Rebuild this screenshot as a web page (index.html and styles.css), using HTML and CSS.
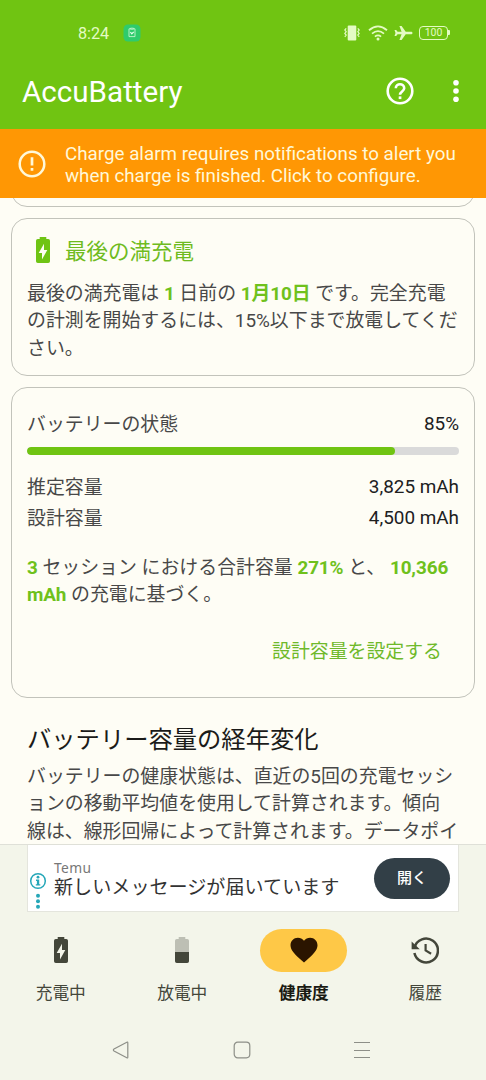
FILE: index.html
```html
<!DOCTYPE html>
<html lang="ja">
<head>
<meta charset="utf-8">
<title>AccuBattery</title>
<link rel="stylesheet" href="styles.css">
</head>
<body>
<div class="screen">
  <header class="top">
    <div class="status">
      <span class="clock">8:24</span>
      <svg class="app-badge" width="18" height="18" viewBox="0 0 18 18"><rect x=".5" y=".5" width="17" height="17" rx="4.5" fill="#2fcb6c"/><path d="M7.500 4.800H6v7.800h6V4.800h-1.500M7.500 4.200h3v1h-3z" fill="none" stroke="#c5f5cf" stroke-width=".9"/><path d="M7.400 8l1.400 1.800 1.900-2" fill="none" stroke="#e9fff0" stroke-width="1.200"/></svg>
      <div class="status-icons">
        <svg width="16" height="16" viewBox="0 0 16 16"><rect x="3.700" y="0.500" width="8.600" height="15" rx="1" fill="#e4fbc4"/><path d="M2.200 3.300L.8 5l1.400 1.700L.8 8.400l1.400 1.700-1.400 1.700M13.800 3.300L15.200 5l-1.400 1.700 1.400 1.700-1.400 1.700 1.400 1.700" fill="none" stroke="#e4fbc4" stroke-width="1.200"/></svg>
        <svg width="20" height="16" viewBox="0 0 20 16"><g fill="none" stroke="#e4fbc4" stroke-width="1.800"><path d="M1 5.300Q10-2.600 19 5.300M4 8.600q6-5 12 0M6.900 11.600q3.100-2.300 6.200 0"/></g><circle cx="10" cy="14" r="1.500" fill="#e4fbc4"/></svg>
        <svg width="19" height="16" viewBox="0 0 19 16"><path d="M18.500 8c0-.8-.7-1.300-1.600-1.300h-5.200L7.600 1H5.400l2.200 5.700H3.600L2.200 4.900H.5L1.500 8 .5 11.100h1.700l1.400-1.800h4L5.400 15h2.200l4.100-5.700h5.200c.9 0 1.600-.5 1.600-1.300z" fill="#e4fbc4"/></svg>
        <span class="battery">100</span>
      </div>
    </div>
    <div class="appbar">
      <h1>AccuBattery</h1>
      <svg class="help" width="28" height="28" viewBox="0 0 28 28"><circle cx="14" cy="14" r="12.300" fill="none" stroke="#fff" stroke-width="2.600"/><path d="M9.800 11.300c0-5.400 8.400-5.400 8.400 0 0 3.100-4.200 3.300-4.200 6.500" fill="none" stroke="#fff" stroke-width="2.600"/><rect x="12.700" y="19.400" width="2.700" height="2.700" fill="#fff"/></svg>
      <svg class="more" width="8" height="24" viewBox="0 0 8 24"><g fill="#fff"><circle cx="4" cy="3.800" r="2.800"/><circle cx="4" cy="12" r="2.800"/><circle cx="4" cy="20.200" r="2.800"/></g></svg>
    </div>
  </header>

  <div class="banner">
    <svg width="28" height="28" viewBox="0 0 28 28"><circle cx="14" cy="14" r="12.300" fill="none" stroke="#fff8d8" stroke-width="2.500"/><path d="M14 7.300v8.200M14 18v2.700" stroke="#fff8d8" stroke-width="2.700"/></svg>
    <p>Charge alarm requires notifications to alert you<br>when charge is finished. Click to configure.</p>
  </div>

  <main class="content">
    <section class="card card-prev"></section>
    <section class="card card-last">
      <h2><svg width="16" height="28" viewBox="0 0 16 28"><path fill="#6fc414" fill-rule="evenodd" d="M4.700 3V1h6.600v2h1.900A1.800 1.800 0 0 1 15 4.800v20.400a1.800 1.800 0 0 1-1.800 1.800H2.800A1.800 1.800 0 0 1 1 25.200V4.800A1.800 1.800 0 0 1 2.800 3zM9 7.700L3.700 17H7v6.500L12.300 14H9z"/></svg><span>最後の満充電</span></h2>
      <p class="text">最後の満充電は <b>1</b> 日前の <b>1月10日</b> です。完全充電<br>の計測を開始するには、15%以下まで放電してくだ<br>さい。</p>
    </section>
    <section class="card card-health">
      <div class="row"><span class="label">バッテリーの状態</span><span class="value">85%</span></div>
      <div class="bar"><div class="fill" style="width:85.2%"></div></div>
      <div class="row"><span class="label">推定容量</span><span class="value">3,825 mAh</span></div>
      <div class="row"><span class="label">設計容量</span><span class="value">4,500 mAh</span></div>
      <p class="text summary"><b>3</b> セッション における合計容量 <b>271%</b> と、 <b>10,366<br>mAh</b> の充電に基づく。</p>
      <div class="action">設計容量を設定する</div>
    </section>
    <section class="history">
      <h3>バッテリー容量の経年変化</h3>
      <p class="text">バッテリーの健康状態は、直近の5回の充電セッシ<br>ョンの移動平均値を使用して計算されます。傾向<br>線は、線形回帰によって計算されます。データポイ</p>
    </section>
  </main>

  <footer class="bottom">
    <div class="ad">
      <svg class="ad-choices" width="18" height="38" viewBox="0 0 18 38"><circle cx="9" cy="9" r="7.300" fill="#fff" stroke="#26a7b8" stroke-width="1.500"/><g fill="#26a7b8"><circle cx="9" cy="5.200" r="1.400"/><path d="M7 7.500h3.200v4.700h1.100v1.400H6.800v-1.400h1.100V8.900H7z"/><circle cx="9" cy="23.800" r="2"/><circle cx="9" cy="29.300" r="2"/><circle cx="9" cy="34.700" r="2"/></g></svg>
      <div class="ad-copy"><span class="brand">Temu</span><span class="headline">新しいメッセージが届いています</span></div>
      <div class="open">開く</div>
    </div>
    <nav class="tabs">
      <div class="tab"><div class="pill"><svg width="16" height="28" viewBox="0 0 16 28"><path fill="#43463a" fill-rule="evenodd" d="M4.700 3V1h6.600v2h1.900A1.800 1.800 0 0 1 15 4.800v20.400a1.800 1.800 0 0 1-1.800 1.800H2.800A1.800 1.800 0 0 1 1 25.200V4.800A1.800 1.800 0 0 1 2.800 3zM9 7.700L3.700 17H7v6.500L12.300 14H9z"/></svg></div>充電中</div>
      <div class="tab"><div class="pill"><svg width="16" height="28" viewBox="0 0 16 28"><path fill="#bdbfb4" d="M1 16V4.800A1.800 1.800 0 0 1 2.800 3h1.900V1h6.600v2h1.900A1.800 1.800 0 0 1 15 4.800V16z"/><path fill="#43463a" d="M1 16h14v9.200a1.800 1.800 0 0 1-1.800 1.800H2.800A1.800 1.800 0 0 1 1 25.200z"/></svg></div>放電中</div>
      <div class="tab active"><div class="pill"><svg width="28" height="28" viewBox="0 0 28 28"><path fill="#2b1500" d="M14 26.500l-2-1.800C5 18.400.5 14.300.5 9.200.5 5 3.700 1.800 7.900 1.800c2.400 0 4.600 1.100 6.100 2.900 1.500-1.800 3.700-2.900 6.100-2.900 4.200 0 7.400 3.200 7.400 7.400 0 5.100-4.500 9.200-11.500 15.500z"/></svg></div>健康度</div>
      <div class="tab"><div class="pill"><svg width="28" height="28" viewBox="0 0 28 28"><path d="M3.500 11.600A11.900 11.900 0 1 1 3.400 17" fill="none" stroke="#43463a" stroke-width="2.500"/><path d="M.6 5.500v7.700h8.200z" fill="#43463a"/><path d="M14.600 8v6.400l5.500 3.300" fill="none" stroke="#43463a" stroke-width="2.200"/></svg></div>履歴</div>
    </nav>
    <div class="sysnav">
      <svg width="18" height="18" viewBox="0 0 18 18"><path d="M15.800 1.700v14.600q0 1-1 .5L2 10q-1.300-1 0-2L14.800 1.200q1-.5 1 .5z"/></svg>
      <svg width="18" height="18" viewBox="0 0 18 18"><rect x="1.200" y="1.200" width="15.600" height="15.600" rx="3.500"/></svg>
      <svg width="18" height="18" viewBox="0 0 18 18"><path d="M1 1.500h16M1 9.500h16M1 16.500h16"/></svg>
    </div>
  </footer>
</div>
</body>
</html>
```
FILE: styles.css
```css
* { box-sizing: border-box; }
body { margin: 0; font-family: Roboto, "Noto Sans CJK JP", sans-serif; }
h1, h2, h3, p { margin: 0; font-weight: 400; }
svg { display: block; flex: none; }
.screen { width: 486px; height: 1080px; display: flex; flex-direction: column; overflow: hidden; background: #fefdf5; white-space: nowrap; }

.top { flex: none; height: 129px; background: #70c412; color: #fff; }
.status { height: 65px; display: flex; align-items: center; padding: 0 38px 0 78px; }
.clock { font-size: 16.200px; width: 45px; padding-top: 1px; color: #e4fbc4; }
.status-icons { margin-left: auto; display: flex; align-items: center; gap: 8px; }
.status-icons svg:nth-child(3) { margin-left: -2px; }
.battery { position: relative; width: 29px; height: 14px; margin-left: -2px; border: 1.500px solid #e4fbc4; border-radius: 4px; color: #e4fbc4; font-size: 10.500px; line-height: 12px; text-align: center; }
.battery::after { content: ""; position: absolute; right: -3px; top: 3px; width: 2px; height: 5px; border-radius: 0 1px 1px 0; background: #e4fbc4; }
.appbar { height: 52px; display: flex; align-items: center; padding: 0 26px 0 22px; }
.appbar h1 { font-size: 29.600px; padding-top: 2px; }
.help { margin-left: auto; }
.more { margin-left: 38.500px; }

.banner { flex: none; height: 69px; display: flex; align-items: center; gap: 19px; padding: 0 18px; background: #ff9704; color: #fff8d8; }
.banner p { font-size: 18.800px; line-height: 22px; padding-top: 2px; }

.content { height: 646px; flex: none; overflow: hidden; padding: 0 11px; color: #484848; font-size: 18.900px; }
.card { border: 1px solid #c2c3bb; border-radius: 16px; padding: 0 15px; }
.card-prev { height: 40px; margin-top: -31px; }
.card-last { height: 158px; margin-top: 11px; padding-top: 15px; }
.card h2 { display: flex; align-items: center; gap: 14px; height: 32px; padding-left: 8px; font-size: 21.500px; color: #6fbb20; }
.card h2 span { padding-bottom: 2px; }
.text { line-height: 27.400px; }
.card-last .text { padding-top: 14px; }
.card b { color: #6fc11c; font-weight: 700; letter-spacing: -.1px; }
.card-health { margin-top: 11px; height: 311px; padding-top: 20px; }
.row { display: flex; justify-content: space-between; align-items: center; height: 31px; }
.label { padding-bottom: 2px; }
.value { color: #20201e; }
.bar { height: 8px; margin: 8px 0 16px; border-radius: 4px; background: #dadada; overflow: hidden; }
.fill { height: 8px; border-radius: 4px; background: #70c412; }
.summary { padding-top: 21px; }
.action { padding: 29px 17px 0 0; text-align: right; line-height: 28px; color: #6fb92a; }
.history { padding: 23px 16px 0; }
.history h3 { font-size: 24.300px; line-height: 37px; color: #1b1b19; }
.history .text { padding-top: 5px; }

.bottom { flex: none; height: 236px; background: #f3f5ea; border-top: 1px solid #dfe0d8; }
.ad { margin: 0 27px; height: 67px; background: #fff; border: 1px solid #e4e5dd; border-top: 0; display: flex; align-items: center; padding-right: 8px; }
.ad-choices { margin: 25px 0 0 1px; }
.ad-copy { display: flex; flex-direction: column; margin: 4px 0 0 7px; }
.brand { font-size: 13.800px; line-height: 16px; letter-spacing: .4px; color: #777; font-family: "Noto Sans", sans-serif; }
.headline { font-size: 19.100px; line-height: 24px; color: #333; }
.open { margin: 1px 0 0 auto; width: 76px; height: 41px; border-radius: 21px; background: #323f47; color: #fff; font-size: 15px; font-weight: 500; line-height: 41px; text-align: center; }
.tabs { display: grid; grid-template-columns: repeat(4, 1fr); padding-top: 17px; height: 107px; }
.tab { display: flex; flex-direction: column; align-items: center; font-size: 16.700px; line-height: 24px; color: #43463a; gap: 10px; }
.pill { width: 87px; height: 43px; border-radius: 22px; display: flex; align-items: center; justify-content: center; }
.pill svg { margin-bottom: 2px; }
.active { color: #191a12; font-weight: 700; }
.active .pill { background: #fec847; }
.sysnav { display: flex; justify-content: space-between; padding: 22px 115px 0 112px; }
.sysnav svg { fill: none; stroke: #8d8f88; stroke-width: 1.200; }
```
